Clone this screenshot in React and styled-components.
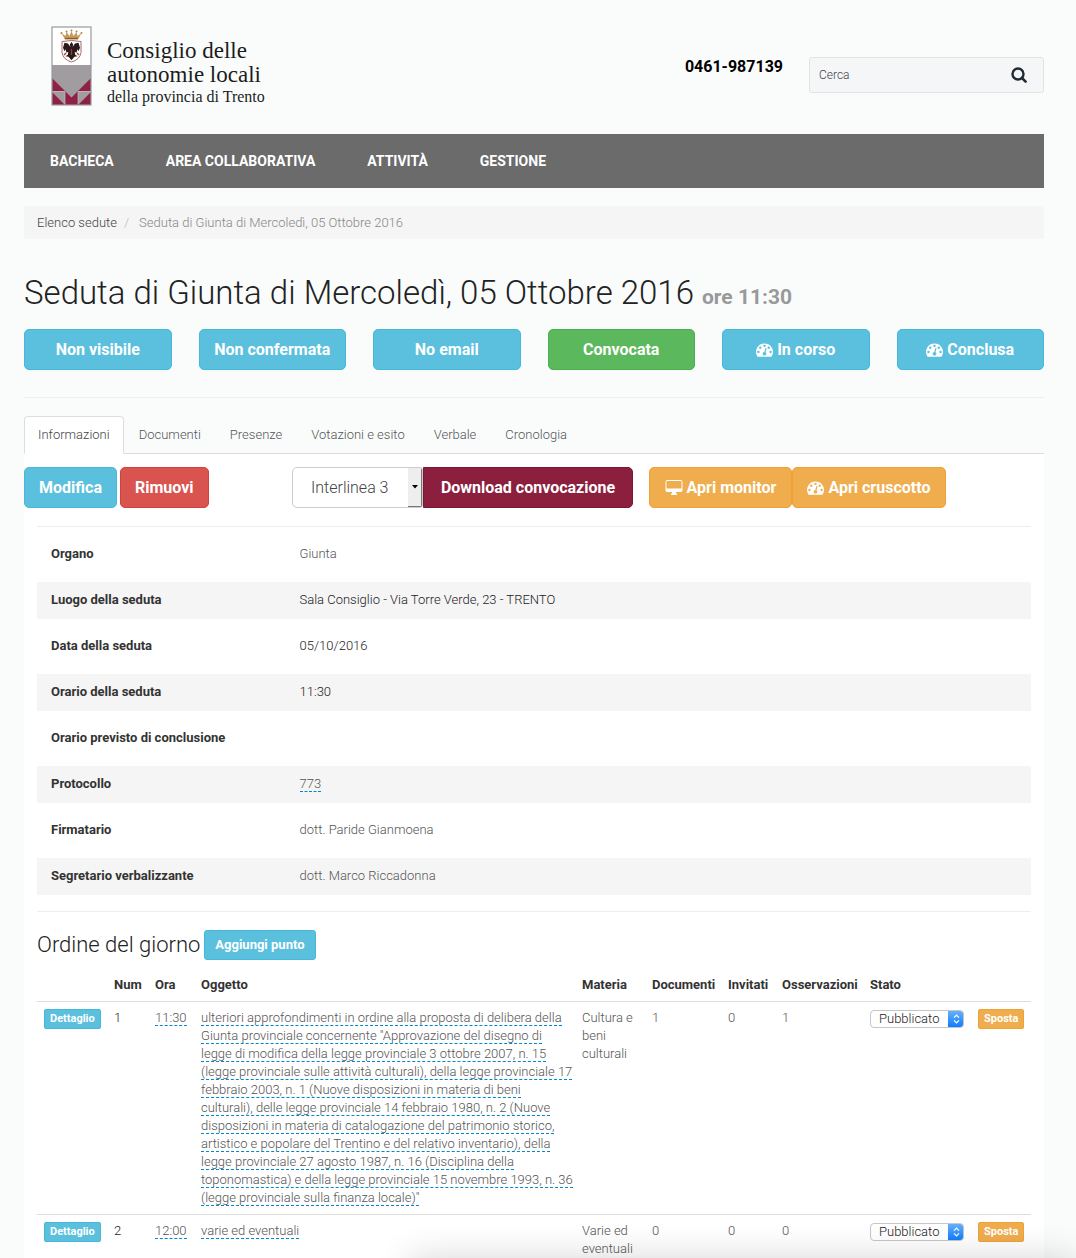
import React from "react";
import styled, { createGlobalStyle, css } from "styled-components";

const GlobalStyle = createGlobalStyle`
  *, *::before, *::after { box-sizing: border-box; }
  body {
    margin: 0;
    background: #fafcfc;
    color: #555;
    font: 300 13px/18px Roboto, "Open Sans", sans-serif;
  }
  button, input, select { font-family: inherit; }
`;

const Page = styled.div`
  padding: 0 32px 0 24px;
`;

const Header = styled.header`
  display: flex;
  align-items: flex-start;
  height: 134px;
`;

const Brand = styled.a`
  display: flex;
  gap: 15px;
  margin: 26px auto 0 27px;
  color: #1c1c1c;
  text-decoration: none;
`;

const Crest = styled.svg`
  width: 41px;
  height: 80px;
`;

const BrandName = styled.span`
  display: flex;
  flex-direction: column;
  padding-top: 13px;
  font-family: "Liberation Serif", "Times New Roman", serif;
  font-weight: 400;
  font-size: 23px;
  line-height: 24px;
  white-space: nowrap;
`;

const BrandSub = styled.span`
  font-size: 16px;
  line-height: 20px;
`;

const Phone = styled.strong`
  margin: 57px 26px 0 0;
  color: #000;
  font-size: 16px;
  font-weight: 700;
  line-height: 20px;
`;

const Search = styled.form`
  display: flex;
  width: 235px;
  height: 36px;
  margin-top: 57px;
  border: 1px solid #e1e2e2;
  border-radius: 3px;
  background: #f5f6f8;
`;

const SearchInput = styled.input`
  flex: 1;
  min-width: 0;
  padding: 0 9px;
  border: 0;
  background: none;
  color: #444;
  font-size: 12px;
  font-weight: 300;
  &::placeholder { color: #444; opacity: 1; }
`;

const SearchButton = styled.button`
  display: flex;
  align-items: center;
  justify-content: center;
  width: 48px;
  padding: 0;
  border: 0;
  background: none;
  color: #222b33;
`;

const Nav = styled.nav`
  display: flex;
  align-items: center;
  height: 54px;
  background: #6b6b6b;
`;

const NavLink = styled.a`
  padding: 0 26px;
  color: #fff;
  font-size: 14px;
  font-weight: 700;
  line-height: 54px;
  text-decoration: none;
  text-transform: uppercase;
`;

const Breadcrumb = styled.nav`
  display: flex;
  gap: 7px;
  height: 33px;
  margin-top: 18px;
  padding: 8px 13px;
  border-radius: 3px;
  background: #f5f5f5;
  color: #888;
`;

const Crumb = styled.a`
  color: #444;
  text-decoration: none;
`;

const Slash = styled.span`
  margin-right: 3px;
  color: #bbb;
`;

const Title = styled.h1`
  margin: 34px 0 17px;
  color: #222;
  font-size: 33px;
  font-weight: 300;
  line-height: 39px;
`;

const TitleTime = styled.small`
  color: #999;
  font-size: 21px;
  font-weight: 700;
  line-height: 1;
`;

const tones = {
  info: ["#5bc0de", "#46b8da"],
  success: ["#5cb85c", "#4cae4c"],
  danger: ["#d9534f", "#d43f3a"],
  warning: ["#f0ad4e", "#eea236"],
  brand: ["#8c1f3e", "#781a35"],
};

const sizes = {
  lg: css`
    height: 41px;
    padding: 0 14px;
    border-radius: 5px;
    font-size: 16px;
  `,
  sm: css`
    height: 30px;
    padding: 0 10px;
    border-radius: 3px;
    font-size: 13px;
  `,
  xs: css`
    height: 20px;
    padding: 0 5px;
    border-radius: 2px;
    font-size: 11px;
  `,
};

const Button = styled.button`
  display: inline-flex;
  align-items: center;
  justify-content: center;
  gap: 4px;
  border: 1px solid ${(p) => tones[p.$tone][1]};
  background: ${(p) => tones[p.$tone][0]};
  color: #fff;
  font-weight: 700;
  line-height: 18px;
  white-space: nowrap;
  cursor: pointer;
  ${(p) => sizes[p.$size]}
  ${(p) => p.$joined && "border-top-left-radius: 0; border-bottom-left-radius: 0;"}
`;

const StateBar = styled.div`
  display: grid;
  grid-template-columns: repeat(6, minmax(0, 1fr));
  gap: 27px;
`;

const Rule = styled.hr`
  margin: ${(p) => p.$margin};
  border: 0;
  border-top: 1px solid #eee;
`;

const Tabs = styled.nav`
  display: flex;
  gap: 1px;
  border-bottom: 1px solid #ddd;
`;

const Tab = styled.a`
  height: 38px;
  margin-bottom: -1px;
  padding: 9px 13px;
  border: 1px solid transparent;
  border-radius: 4px 4px 0 0;
  color: #555;
  text-decoration: none;
  &[aria-current] {
    border-color: #ddd #ddd #fff;
    background: #fff;
    color: #444;
  }
`;

const Panel = styled.main`
  padding: 13px 13px 0;
  background: #fff;
`;

const Toolbar = styled.div`
  display: grid;
  grid-template-columns: 252px 341px 297px;
  gap: 16px;
  margin: 0 -13px;
`;

const Group = styled.div`
  display: flex;
  gap: ${(p) => p.$gap || "0"};
  ${(p) => p.$fill && "& > button { flex: 1 1 auto; }"}
`;

const SpacingField = styled.div`
  display: grid;
  grid-template-columns: 1fr 14px;
  width: 131px;
  height: 41px;
  overflow: hidden;
  border: 1px solid #ccc;
  border-radius: 5px 3px 3px 5px;
  background: #fff;
`;

const SpacingSelect = styled.select`
  grid-area: 1 / 1 / 2 / 3;
  padding: 0 18px;
  border: 0;
  background: none;
  color: #444;
  font-size: 16px;
  font-weight: 300;
  appearance: none;
`;

const SpacingArrow = styled.span`
  grid-area: 1 / 2;
  display: flex;
  align-items: center;
  justify-content: center;
  border-right: 1px solid #777;
  border-bottom: 1px solid #777;
  background: #eee;
  pointer-events: none;
`;

const Details = styled.dl`
  display: grid;
  gap: 9px;
  margin: 0;
`;

const Detail = styled.div`
  display: grid;
  grid-template-columns: 1fr 3fr;
  height: 37px;
  padding-top: 9px;
  &:nth-child(even) { background: #f5f5f5; }
`;

const Term = styled.dt`
  padding-left: 14px;
  color: #333;
  font-weight: 700;
`;

const Value = styled.dd`
  margin: 0;
  padding-left: 14px;
  color: ${(p) => (p.$dark ? "#222" : "#555")};
`;

const Editable = styled.a`
  border-bottom: 1px dashed #08c;
  color: #555;
  text-decoration: none;
`;

const AgendaHead = styled.div`
  display: flex;
  align-items: center;
  gap: 4px;
  margin-bottom: 9px;
`;

const AgendaTitle = styled.h2`
  margin: 0;
  color: #222;
  font-size: 22px;
  font-weight: 300;
  line-height: 26px;
`;

const Table = styled.table`
  width: 100%;
  border-collapse: collapse;
  table-layout: fixed;
`;

const Col = styled.col`
  width: ${(p) => p.$w};
`;

const Th = styled.th`
  padding: 7px 0 7px 7px;
  color: #333;
  font-weight: 700;
  text-align: left;
`;

const Row = styled.tr`
  border-top: 1px solid #ddd;
`;

const Td = styled.td`
  padding: 7px 0 7px 7px;
  color: ${(p) => (p.$dark ? "#222" : "#555")};
  vertical-align: top;
  ${Row}:last-child & { padding-bottom: 0; }
`;

const Status = styled.div`
  display: grid;
  grid-template-columns: 1fr 15px;
  width: 94px;
  height: 18px;
  margin-top: 1px;
  overflow: hidden;
  border: 1px solid #c6c6c6;
  border-radius: 4px;
  background: #fff;
`;

const StatusSelect = styled.select`
  grid-area: 1 / 1 / 2 / 3;
  padding: 0 8px;
  border: 0;
  background: none;
  color: #222;
  font-size: 13px;
  font-weight: 300;
  line-height: 16px;
  appearance: none;
`;

const StatusArrow = styled.span`
  grid-area: 1 / 2;
  display: flex;
  align-items: center;
  justify-content: center;
  margin: -1px -1px -1px 0;
  background: linear-gradient(#6cb3fa, #0a7aff);
  pointer-events: none;
`;

const BottomShade = styled.div`
  position: fixed;
  top: 100%;
  right: 0;
  left: 410px;
  height: 60px;
  box-shadow: 0 0 36px rgba(0, 0, 0, 0.16);
  pointer-events: none;
`;

function GaugeIcon() {
  return (
    <svg width="17" height="17" viewBox="0 0 1792 1792" fill="currentColor" aria-hidden="true">
      <path d="M384 1152q0-53-37.5-90.5t-90.5-37.5-90.5 37.5-37.5 90.5 37.5 90.5 90.5 37.5 90.5-37.5 37.5-90.5zm192-448q0-53-37.5-90.5t-90.5-37.5-90.5 37.5-37.5 90.5 37.5 90.5 90.5 37.5 90.5-37.5 37.5-90.5zm428 481l101-382q6-26-7.5-48.5t-38.5-29.5-48 6.5-30 39.5l-101 382q-60 5-107 43.5t-63 98.5q-20 77 20 146t117 89 146-20 89-117q16-60-6-117t-72-91zm660-33q0-53-37.5-90.5t-90.5-37.5-90.5 37.5-37.5 90.5 37.5 90.5 90.5 37.5 90.5-37.5 37.5-90.5zm-640-640q0-53-37.5-90.5t-90.5-37.5-90.5 37.5-37.5 90.5 37.5 90.5 90.5 37.5 90.5-37.5 37.5-90.5zm448 192q0-53-37.5-90.5t-90.5-37.5-90.5 37.5-37.5 90.5 37.5 90.5 90.5 37.5 90.5-37.5 37.5-90.5zm320 448q0 261-141 483-19 29-54 29h-1402q-35 0-54-29-141-221-141-483 0-182 71-348t191-286 286-191 348-71 348 71 286 191 191 286 71 348z" />
    </svg>
  );
}

function MonitorIcon() {
  return (
    <svg width="18" height="17" viewBox="0 0 18 17" aria-hidden="true">
      <rect x="1" y="1.5" width="16" height="11" rx="1" fill="none" stroke="currentColor" />
      <path d="M1 9.500h16v3H1zM7 12.500h4V15H7zM6 14.500h6V16H6z" fill="currentColor" />
    </svg>
  );
}

function SearchIcon() {
  return (
    <svg width="16" height="16" viewBox="0 0 16 16" fill="none" stroke="currentColor" aria-hidden="true">
      <circle cx="7" cy="7" r="5.5" strokeWidth="2.4" />
      <path d="M11 11l3.600 3.600" strokeWidth="2.6" strokeLinecap="round" />
    </svg>
  );
}

function CrestMark() {
  return (
    <Crest viewBox="0 0 41 80" aria-hidden="true">
      <rect x="1" y="1" width="39" height="78" fill="#fff" />
      <path d="M1 39h39v40H1z" fill="#a09c9f" />
      <path d="M1 52l13 13H1z" fill="#8f2144" />
      <path d="M40 52L27 65h13z" fill="#8f2144" />
      <path d="M1 66v13h13z" fill="#8f2144" />
      <path d="M40 66v13H27z" fill="#8f2144" />
      <path d="M14 79V65l6.500 6.500L27 65v14z" fill="#8f2144" />
      <path d="M1 65.500h13v13M40 65.500H27v13" fill="none" stroke="#c9bcc3" strokeWidth=".7" />
      <rect x="1" y="1" width="39" height="78" fill="none" stroke="#999" strokeWidth="1.2" />
      <path d="M10.500 7l4 3 1-4 3 4 2-5 2 5 3-4 1 4 4-3-3.500 6.500h-13z" fill="#c49a5b" />
      <path d="M14 12.500h13" stroke="#8a5a2b" strokeWidth="1.2" />
      <g fill="#b08445">
        <circle cx="10.5" cy="7" r="1" />
        <circle cx="15.5" cy="5.5" r="1" />
        <circle cx="20.5" cy="4.5" r="1" />
        <circle cx="25.5" cy="5.5" r="1" />
        <circle cx="30.5" cy="7" r="1" />
      </g>
      <path d="M11 15.500q9.500-2 19 0v11q-1 7-9.500 9.500Q12 33.500 11 26.500z" fill="#fff" stroke="#a86b66" />
      <path d="M20.500 16l1.700 2.500-.6 2.500 2.400-3.500 3.500-.8 1.500 5-1.500 3.500-1-2-1 3.500-1.800-1 .5 3 2.300 1.500-3 .5-3 3.500-3-3.500-3-.5 2.300-1.500.5-3-1.800 1-1-3.500-1 2-1.500-3.500 1.500-5 3.500.8L19.400 21l-.6-2.500z" fill="#2a1a1b" />
      <path d="M20.500 23v6M15 27l-2 2M26 27l2 2" stroke="#a33a2b" strokeWidth="1.3" />
    </Crest>
  );
}

const states = [
  ["Non visibile", "info"],
  ["Non confermata", "info"],
  ["No email", "info"],
  ["Convocata", "success"],
  ["In corso", "info", true],
  ["Conclusa", "info", true],
];

const tabs = ["Informazioni", "Documenti", "Presenze", "Votazioni e esito", "Verbale", "Cronologia"];

const details = [
  { term: "Organo", value: "Giunta" },
  { term: "Luogo della seduta", value: "Sala Consiglio - Via Torre Verde, 23 - TRENTO", dark: true },
  { term: "Data della seduta", value: "05/10/2016", dark: true },
  { term: "Orario della seduta", value: "11:30", dark: true },
  { term: "Orario previsto di conclusione", value: "" },
  { term: "Protocollo", value: "773", editable: true },
  { term: "Firmatario", value: "dott. Paride Gianmoena" },
  { term: "Segretario verbalizzante", value: "dott. Marco Riccadonna" },
];

const columns = [
  ["", "70px"],
  ["Num", "41px"],
  ["Ora", "46px"],
  ["Oggetto", "auto"],
  ["Materia", "70px"],
  ["Documenti", "76px"],
  ["Invitati", "54px"],
  ["Osservazioni", "88px"],
  ["Stato", "108px"],
  ["", "60px"],
];

const agenda = [
  {
    num: 1,
    time: "11:30",
    subject:
      'ulteriori approfondimenti in ordine alla proposta di delibera della Giunta provinciale concernente "Approvazione del disegno di legge di modifica della legge provinciale 3 ottobre 2007, n. 15 (legge provinciale sulle attività culturali), della legge provinciale 17 febbraio 2003, n. 1 (Nuove disposizioni in materia di beni culturali), delle legge provinciale 14 febbraio 1980, n. 2 (Nuove disposizioni in materia di catalogazione del patrimonio storico, artistico e popolare del Trentino e del relativo inventario), della legge provinciale 27 agosto 1987, n. 16 (Disciplina della toponomastica) e della legge provinciale 15 novembre 1993, n. 36 (legge provinciale sulla finanza locale)"',
    topic: "Cultura e beni culturali",
    counts: [1, 0, 1],
  },
  {
    num: 2,
    time: "12:00",
    subject: "varie ed eventuali",
    topic: "Varie ed eventuali",
    counts: [0, 0, 0],
  },
];

export default function App() {
  return (
    <Page>
      <GlobalStyle />
      <Header>
        <Brand href="#home">
          <CrestMark />
          <BrandName>
            <span>Consiglio delle</span>
            <span>autonomie locali</span>
            <BrandSub>della provincia di Trento</BrandSub>
          </BrandName>
        </Brand>
        <Phone>0461-987139</Phone>
        <Search role="search">
          <SearchInput type="text" placeholder="Cerca" aria-label="Cerca" />
          <SearchButton type="button" aria-label="Avvia ricerca">
            <SearchIcon />
          </SearchButton>
        </Search>
      </Header>

      <Nav>
        {["Bacheca", "Area collaborativa", "Attività", "Gestione"].map((item) => (
          <NavLink key={item} href="#menu">{item}</NavLink>
        ))}
      </Nav>

      <Breadcrumb aria-label="Percorso">
        <Crumb href="#sedute">Elenco sedute</Crumb>
        <Slash>/</Slash>
        <span>Seduta di Giunta di Mercoledì, 05 Ottobre 2016</span>
      </Breadcrumb>

      <Title>
        Seduta di Giunta di Mercoledì, 05 Ottobre 2016 <TitleTime>ore 11:30</TitleTime>
      </Title>

      <StateBar>
        {states.map(([label, tone, gauge]) => (
          <Button key={label} type="button" $size="lg" $tone={tone}>
            {gauge && <GaugeIcon />}
            {label}
          </Button>
        ))}
      </StateBar>

      <Rule $margin="27px 0 18px" />

      <Tabs>
        {tabs.map((tab, i) => (
          <Tab key={tab} href="#scheda" aria-current={i === 0 ? "page" : undefined}>{tab}</Tab>
        ))}
      </Tabs>

      <Panel>
        <Toolbar>
          <Group $gap="3px">
            <Button type="button" $size="lg" $tone="info">Modifica</Button>
            <Button type="button" $size="lg" $tone="danger">Rimuovi</Button>
          </Group>
          <Group $fill>
            <SpacingField>
              <SpacingSelect aria-label="Interlinea" defaultValue="3">
                <option value="3">Interlinea 3</option>
              </SpacingSelect>
              <SpacingArrow>
                <svg width="6" height="4" viewBox="0 0 6 4" aria-hidden="true">
                  <path d="M0 0h6L3 3.500z" fill="#000" />
                </svg>
              </SpacingArrow>
            </SpacingField>
            <Button type="button" $size="lg" $tone="brand" $joined>Download convocazione</Button>
          </Group>
          <Group $fill>
            <Button type="button" $size="lg" $tone="warning"><MonitorIcon />Apri monitor</Button>
            <Button type="button" $size="lg" $tone="warning"><GaugeIcon />Apri cruscotto</Button>
          </Group>
        </Toolbar>

        <Rule $margin="18px 0 9px" />

        <Details>
          {details.map((d) => (
            <Detail key={d.term}>
              <Term>{d.term}</Term>
              <Value $dark={d.dark}>
                {d.editable ? <Editable href="#modifica">{d.value}</Editable> : d.value}
              </Value>
            </Detail>
          ))}
        </Details>

        <Rule $margin="16px 0 18px" />

        <AgendaHead>
          <AgendaTitle>Ordine del giorno</AgendaTitle>
          <Button type="button" $size="sm" $tone="info">Aggiungi punto</Button>
        </AgendaHead>

        <Table>
          <colgroup>
            {columns.map(([, w], i) => <Col key={i} $w={w} />)}
          </colgroup>
          <thead>
            <tr>
              {columns.map(([label], i) => <Th key={i} scope="col">{label}</Th>)}
            </tr>
          </thead>
          <tbody>
            {agenda.map((a) => (
              <Row key={a.num}>
                <Td><Button type="button" $size="xs" $tone="info">Dettaglio</Button></Td>
                <Td $dark>{a.num}</Td>
                <Td><Editable href="#ora">{a.time}</Editable></Td>
                <Td><Editable href="#oggetto">{a.subject}</Editable></Td>
                <Td>{a.topic}</Td>
                {a.counts.map((n, i) => <Td key={i}>{n}</Td>)}
                <Td>
                  <Status>
                    <StatusSelect aria-label={`Stato del punto ${a.num}`} defaultValue="Pubblicato">
                      <option>Pubblicato</option>
                    </StatusSelect>
                    <StatusArrow>
                      <svg width="7" height="10" viewBox="0 0 7 10" fill="none" stroke="#fff" strokeWidth="1.2" aria-hidden="true">
                        <path d="M1 3.700L3.500 1.200 6 3.700M1 6.300l2.500 2.500L6 6.300" />
                      </svg>
                    </StatusArrow>
                  </Status>
                </Td>
                <Td><Button type="button" $size="xs" $tone="warning">Sposta</Button></Td>
              </Row>
            ))}
          </tbody>
        </Table>
      </Panel>
      <BottomShade />
    </Page>
  );
}
